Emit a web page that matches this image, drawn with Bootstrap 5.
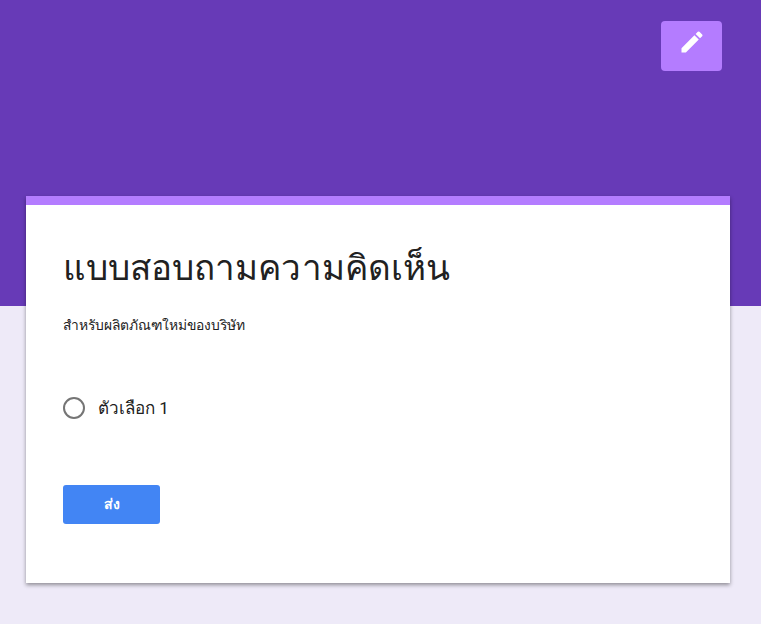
<!DOCTYPE html>
<html lang="th">
<head>
<meta charset="utf-8">
<title>แบบสอบถามความคิดเห็น</title>
<link href="https://cdn.jsdelivr.net/npm/bootstrap@5.3.0/dist/css/bootstrap.min.css" rel="stylesheet">
<style>
html,body{height:100%;overflow:hidden}
body{background:#eeeaf8;font-family:Roboto,"Noto Sans","Liberation Sans",sans-serif;color:#212121}
.hero{height:306px;background:#673ab7;padding:21px 39px 0 0}
.edit-btn{width:61px;height:50px;background:#b47cff;border:0;border-radius:4px;padding:7px 0 0}
.edit-btn:hover,.edit-btn:active{background:#b47cff!important}
.form-sheet{margin:-110px 31px 0 26px;height:387px;border:0;border-top:9px solid #b47cff;border-radius:0;box-shadow:0 2px 4px rgba(0,0,0,.4);padding:0 37px}
.form-title{font-size:35px;line-height:40px;font-weight:400;letter-spacing:.05px;margin:44px 0 0;color:#212121}
.form-desc{font-size:13.85px;line-height:20px;margin:26px 0 0;color:#212121}
.opt-row{margin-top:61px;height:24px;gap:13px;font-size:17px;line-height:24px}
.ring{width:22px;height:22px;border:2px solid #757575;border-radius:50%;flex:none}
.send-btn{width:97px;height:39px;margin-top:65px;background:#4285f4;border:0;border-radius:3px;color:#fff;font-size:14px;font-weight:700;padding:0}
.send-btn:hover,.send-btn:active{background:#4285f4!important;color:#fff!important}
</style>
</head>
<body>
<div class="hero d-flex justify-content-end align-items-start">
<button type="button" class="btn edit-btn d-flex justify-content-center" aria-label="แก้ไข">
<svg width="28" height="28" viewBox="0 0 24 24" fill="#fff"><path d="M3 17.25V21h3.75L17.81 9.94l-3.75-3.75L3 17.25zM20.71 7.04a1 1 0 0 0 0-1.41l-2.34-2.34a1 1 0 0 0-1.41 0l-1.83 1.83 3.75 3.75 1.83-1.83z"/></svg>
</button>
</div>
<main class="card form-sheet">
<h1 class="form-title">แบบสอบถามความคิดเห็น</h1>
<p class="form-desc">สำหรับผลิตภัณฑใหม่ของบริษัท</p>
<div class="opt-row d-flex align-items-center"><span class="ring"></span><span>ตัวเลือก 1</span></div>
<div><button type="button" class="btn send-btn">ส่ง</button></div>
</main>
<script src="https://cdn.jsdelivr.net/npm/bootstrap@5.3.0/dist/js/bootstrap.bundle.min.js"></script>
</body>
</html>
